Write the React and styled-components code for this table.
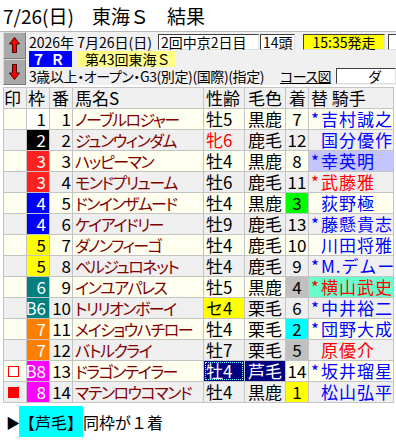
import React from 'react';
import styled, { createGlobalStyle } from 'styled-components';

const GlobalStyle = createGlobalStyle`
  html, body {
    margin: 0;
    padding: 0;
    background: #ffffff;
    overflow: hidden;
  }
  body {
    font-family: "Noto Sans CJK JP", "Noto Sans", sans-serif;
    color: #000;
  }
`;

const WAKU = {
  1: ['#ffffff', '#000000'],
  2: ['#000000', '#ffffff'],
  3: ['#ff2020', '#ffffff'],
  4: ['#0000ff', '#ffffff'],
  5: ['#ffff00', '#000000'],
  6: ['#008080', '#ffffff'],
  7: ['#ff8000', '#ffffff'],
  8: ['#ff00ff', '#ffffff'],
};

const RANK_BG = { 1: '#ffff00', 2: '#00ffff', 3: '#00ff00', 4: '#c0c0c0', 5: '#c0c0c0' };

const BLUE = '#0000ff';
const RED = '#ff0000';

const horses = [
  { waku: 1, label: '1', no: 1, name: 'ノーブルロジャー', sa: '牡5', coat: '黒鹿', rank: 7, star: true, jockey: '吉村誠之' },
  { waku: 2, label: '2', no: 2, name: 'ジュンウィンダム', sa: '牝6', saColor: RED, coat: '鹿毛', rank: 12, jockey: '国分優作' },
  { waku: 3, label: '3', no: 3, name: 'ハッピーマン', sa: '牡4', coat: '黒鹿', rank: 8, star: true, jockey: '幸英明', jBg: '#c4c4ff' },
  { waku: 3, label: '3', no: 4, name: 'モンドプリューム', sa: '牡6', coat: '鹿毛', rank: 11, star: true, jockey: '武藤雅', jColor: RED },
  { waku: 4, label: '4', no: 5, name: 'ドンインザムード', sa: '牡4', coat: '黒鹿', rank: 3, jockey: '荻野極' },
  { waku: 4, label: '4', no: 6, name: 'ケイアイドリー', sa: '牡9', coat: '鹿毛', rank: 13, star: true, jockey: '藤懸貴志' },
  { waku: 5, label: '5', no: 7, name: 'ダノンフィーゴ', sa: '牡4', coat: '鹿毛', rank: 10, jockey: '川田将雅' },
  { waku: 5, label: '5', no: 8, name: 'ベルジュロネット', sa: '牡4', coat: '鹿毛', rank: 9, star: true, jockey: 'M.デムー' },
  { waku: 6, label: '6', no: 9, name: 'インユアパレス', sa: '牡5', coat: '黒鹿', rank: 4, star: true, jockey: '横山武史', jColor: RED, jBg: '#66ffcc' },
  { waku: 6, label: 'B6', no: 10, name: 'トリリオンボーイ', sa: 'セ4', saBg: '#ffff00', coat: '栗毛', rank: 6, star: true, jockey: '中井裕二' },
  { waku: 7, label: '7', no: 11, name: 'メイショウハチロー', sa: '牡4', coat: '栗毛', rank: 2, star: true, jockey: '団野大成' },
  { waku: 7, label: '7', no: 12, name: 'バトルクライ', sa: '牡7', coat: '栗毛', rank: 5, jockey: '原優介', jColor: RED },
  { waku: 8, label: 'B8', no: 13, name: 'ドラゴンテイラー', sa: '牡4', coat: '芦毛', rank: 14, star: true, jockey: '坂井瑠星', mark: 'open', selected: true },
  { waku: 8, label: '8', no: 14, name: 'マテンロウコマンド', sa: '牡4', coat: '黒鹿', rank: 1, jockey: '松山弘平', mark: 'filled' },
];

const Page = styled.div`
  width: 396px;
  height: 441px;
  overflow: hidden;
`;

const Title = styled.h1`
  margin: 0;
  height: 31px;
  padding-left: 3px;
  display: flex;
  align-items: center;
  gap: 18px;
  font-size: 19px;
  font-weight: 400;
  line-height: 1;
`;

const Panel = styled.div`
  display: flex;
  height: 53px;
  background: #f0f0f0;
  border-top: 1px solid #b8b8b8;
`;

const ArrowColumn = styled.div`
  display: flex;
  flex-direction: column;
  margin-left: 3px;
  width: 23px;
  flex: none;
`;

const ArrowButton = styled.div`
  flex: 1;
  display: flex;
  align-items: center;
  justify-content: center;
  background: #a9a9a9;
  border-top: 1px solid #dcdcdc;
  border-left: 1px solid #dcdcdc;
  border-right: 1px solid #7a7a7a;
  border-bottom: 1px solid #7a7a7a;
`;

const Info = styled.div`
  flex: 1;
  display: flex;
  flex-direction: column;
  padding: 1px 0 0 3px;
  font-size: 14px;
  min-width: 0;
`;

const InfoRow = styled.div`
  display: flex;
  align-items: center;
  height: ${p => p.$h}px;
  white-space: nowrap;
`;

const Plain = styled.span`
  flex: none;
  width: ${p => (p.$w ? `${p.$w}px` : 'auto')};
  letter-spacing: ${p => p.$ls || 0}px;
  font-feature-settings: "palt";
`;

const Box = styled.div`
  flex: none;
  width: ${p => p.$w}px;
  margin-left: ${p => p.$ml || 0}px;
  height: 16px;
  display: flex;
  align-items: center;
  justify-content: ${p => p.$justify || 'flex-start'};
  padding: 0 ${p => p.$pr ?? 2}px 0 ${p => p.$pl ?? 2}px;
  box-sizing: border-box;
  background: ${p => p.$bg || '#ffffff'};
  color: ${p => p.$color || '#000'};
  font-weight: ${p => (p.$bold ? 700 : 400)};
  letter-spacing: ${p => p.$ls || 0}px;
  border-top: 1px solid ${p => (p.$flat ? 'transparent' : '#404040')};
  border-left: 1px solid ${p => (p.$flat ? 'transparent' : '#404040')};
  border-right: 1px solid ${p => (p.$flat ? 'transparent' : '#e0e0e0')};
  border-bottom: 1px solid ${p => (p.$flat ? 'transparent' : '#e0e0e0')};
  line-height: 14px;
`;

const CourseLink = styled.span`
  margin-left: auto;
  text-decoration: underline;
  font-feature-settings: "palt";
  letter-spacing: -0.5px;
`;

const Table = styled.div`
  margin: 2px 0 0 3px;
  width: 391px;
  display: flex;
  flex-direction: column;
  gap: 1px;
  padding: 1px;
  box-sizing: border-box;
  background: #c4c4c4;
`;

const Row = styled.div`
  --row-bg: ${p => p.$bg};
  display: grid;
  grid-template-columns: 22px 22px 22px 130px 40px 40px 22px 84px;
  grid-auto-rows: 20px;
  gap: 1px;
`;

const Cell = styled.div`
  display: flex;
  align-items: center;
  justify-content: ${p => p.$align || 'flex-start'};
  padding: 0 ${p => p.$pr ?? 2}px 0 ${p => p.$pl ?? 2}px;
  background: ${p => p.$bg || 'var(--row-bg)'};
  color: ${p => p.$color || '#000'};
  font-size: ${p => p.$size || 17}px;
  line-height: 20px;
  white-space: nowrap;
  letter-spacing: ${p => p.$ls || 0}px;
  font-feature-settings: ${p => (p.$palt ? '"palt"' : 'normal')};
  outline: ${p => (p.$focus ? '1px dotted #7fffff' : 'none')};
  outline-offset: -2px;
`;

const Star = styled.span`
  display: inline-block;
  width: 10px;
  flex: none;
`;

const Mark = styled.span`
  width: 11px;
  height: 11px;
  box-sizing: border-box;
  border: 1px solid #ff0000;
  background: ${p => (p.$filled ? '#ff0000' : '#ffffff')};
`;

const Footer = styled.div`
  display: flex;
  align-items: center;
  height: 31px;
  margin-top: 3px;
  padding-left: 6px;
  font-size: 16px;
`;

const Pointer = styled.span`
  width: 13px;
  font-size: 14px;
`;

const CoatTag = styled.span`
  display: flex;
  align-items: center;
  justify-content: center;
  height: 31px;
  width: 64px;
  background: #00ffff;
`;

const Arrow = ({ down }) => (
  <svg width="11" height="16" viewBox="0 0 11 16">
    <polygon
      points="5.5,0.5 10.5,7 7.5,7 7.5,15.5 3.5,15.5 3.5,7 0.5,7"
      fill="#ff0000"
      stroke="#400000"
      strokeWidth="1"
      transform={down ? 'rotate(180 5.5 8)' : undefined}
    />
  </svg>
);

const App = () => {
  return (
    <Page>
      <GlobalStyle />
      <Title>
        <span>7/26(日)</span>
        <span>東海Ｓ</span>
        <span>結果</span>
      </Title>
      <Panel>
        <ArrowColumn>
          <ArrowButton><Arrow /></ArrowButton>
          <ArrowButton><Arrow down /></ArrowButton>
        </ArrowColumn>
        <Info>
          <InfoRow $h={17}>
            <Plain $w={129}>2026年 7月26日(日)</Plain>
            <Box $w={101}>2回中京2日目</Box>
            <Box $w={35} $ml={1}>14頭</Box>
            <Box $w={82} $ml={8} $bg="#ffff00" $justify="center">15:35発走</Box>
            <Box $w={40} $ml={3} />
          </InfoRow>
          <InfoRow $h={17}>
            <Box $w={43} $bg={BLUE} $color="#fff" $bold $justify="center" $ls={5} $flat>７Ｒ</Box>
            <Box $w={98} $ml={5} $bg="#ffff88" $pl={7} $flat>第43回東海Ｓ</Box>
          </InfoRow>
          <InfoRow $h={18}>
            <Plain $ls={-0.4}>3歳以上・オープン・G3(別定)(国際)(指定)</Plain>
            <CourseLink>コース図</CourseLink>
            <Box $w={60} $ml={5} $pl={31}>ダ</Box>
          </InfoRow>
        </Info>
      </Panel>
      <Table>
        <Row $bg="#f0f0f0">
          <Cell $pl={0}>印</Cell>
          <Cell $pl={1}>枠</Cell>
          <Cell>番</Cell>
          <Cell>馬名S</Cell>
          <Cell>性齢</Cell>
          <Cell $pl={3}>毛色</Cell>
          <Cell $pl={3}>着</Cell>
          <Cell>替&nbsp;騎手</Cell>
        </Row>
        {horses.map((h, i) => {
          const [wBg, wFg] = WAKU[h.waku];
          return (
            <Row key={h.no} $bg={i % 2 === 0 ? '#fffff0' : '#efefef'}>
              <Cell $pl={4}>{h.mark && <Mark $filled={h.mark === 'filled'} />}</Cell>
              <Cell $align="flex-end" $bg={wBg} $color={wFg} $pr={3}>{h.label}</Cell>
              <Cell $align="flex-end" $pr={1}>{h.no}</Cell>
              <Cell $color="#800000" $palt $size={16} $ls={-1.5}>{h.name}</Cell>
              <Cell
                $bg={h.selected ? '#000080' : h.saBg}
                $color={h.selected ? '#fff' : h.saColor}
                $focus={h.selected}
              >
                {h.sa}
              </Cell>
              <Cell $pl={3} $bg={h.selected ? '#000080' : undefined} $color={h.selected ? '#fff' : undefined}>
                {h.coat}
              </Cell>
              <Cell $align="center" $bg={RANK_BG[h.rank]} $pl={0} $pr={0}>{h.rank}</Cell>
              <Cell $bg={h.jBg} $color={h.jColor || BLUE} $ls={1}>
                <Star>{h.star ? '*' : ''}</Star>
                {h.jockey}
              </Cell>
            </Row>
          );
        })}
      </Table>
      <Footer>
        <Pointer>▶</Pointer>
        <CoatTag>【芦毛】</CoatTag>
        <span>同枠が１着</span>
      </Footer>
    </Page>
  );
};

export default App;
